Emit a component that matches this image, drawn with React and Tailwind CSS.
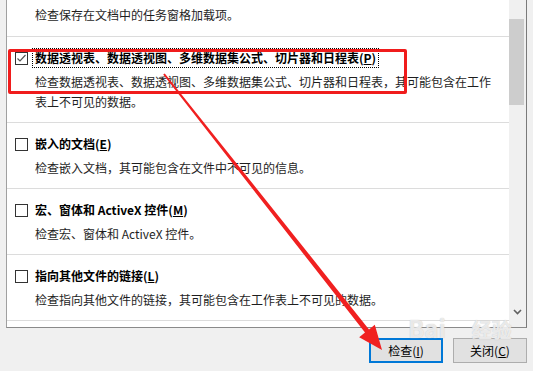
import React from "react";

const rows = [
  {
    title: "数据透视表、数据透视图、多维数据集公式、切片器和日程表(",
    key: "P",
    desc: [
      "检查数据透视表、数据透视图、多维数据集公式、切片器和日程表，其可能包含在工作",
      "表上不可见的数据。",
    ],
    checked: true,
  },
  {
    title: "嵌入的文档(",
    key: "E",
    desc: ["检查嵌入文档，其可能包含在文件中不可见的信息。"],
  },
  {
    title: "宏、窗体和 ActiveX 控件(",
    key: "M",
    desc: ["检查宏、窗体和 ActiveX 控件。"],
  },
  {
    title: "指向其他文件的链接(",
    key: "L",
    desc: ["检查指向其他文件的链接，其可能包含在工作表上不可见的数据。"],
  },
];

const CheckBox = ({ checked }) => (
  <div className="w-[13px] h-[13px] border border-[#333] bg-white flex items-center justify-center shrink-0">
    {checked && (
      <svg width="11" height="11" viewBox="0 0 11 11">
        <polyline
          points="1.5,5.5 4,8 9.5,2"
          fill="none"
          stroke="#555"
          strokeWidth="1.2"
        />
      </svg>
    )}
  </div>
);

const Row = ({ row }) => (
  <div className="border-t border-[#dcdcdc] pt-[13px] pb-[10px] pl-[8px]">
    <div className="flex items-center h-4">
      <CheckBox checked={row.checked} />
      <div
        className={
          "ml-[5px] px-[2px] font-bold text-black leading-[18px] " +
          (row.checked ? "outline outline-1 outline-dotted outline-black" : "")
        }
      >
        {row.title}
        <span className="underline">{row.key}</span>)
      </div>
    </div>
    <div className="mt-[6px] pl-[20px] text-[#1e1e1e] leading-[20px]">
      {row.desc.map((d, i) => (
        <div key={i}>{d}</div>
      ))}
    </div>
  </div>
);

const App = () => {
  return (
    <div
      className="relative w-[533px] h-[371px] bg-[#f0f0f0] overflow-hidden text-[12px]"
      style={{ fontFamily: '"Noto Sans CJK SC", "Noto Sans", sans-serif' }}
    >
      <div className="ml-[6px] w-[521px] h-[328px] flex bg-white border-l border-r border-b border-l-[#a0a0a0] border-r-[#7a7a7a] border-b-[#8a8a8a]">
        <div className="flex-1">
          <div className="pt-[5px] pb-[11px] pl-[28px] leading-[20px] text-[#1e1e1e]">
            检查保存在文档中的任务窗格加载项。
          </div>
          {rows.map((r, i) => (
            <Row key={i} row={r} />
          ))}
          <div className="border-t border-[#dcdcdc]" />
        </div>
        <div className="w-[17px] bg-[#f0f0f0] flex flex-col">
          <div className="h-[19px]" />
          <div className="h-[86px] w-[15px] bg-[#cdcdcd]" />
          <div className="flex-1" />
          <div className="h-[18px] flex items-start justify-center">
            <svg width="9" height="6" viewBox="0 0 9 6">
              <polyline
                points="1,1 4.5,4.5 8,1"
                fill="none"
                stroke="#606060"
                strokeWidth="1.6"
              />
            </svg>
          </div>
        </div>
      </div>

      <div className="flex justify-end gap-[10px] pr-[6px] mt-[10px]">
        <button className="w-[74px] h-[25px] bg-[#e1e1e1] border-2 border-[#0078d7] text-black text-[12px] flex items-center justify-center">
          检查(<span className="underline">I</span>)
        </button>
        <button className="w-[74px] h-[25px] bg-[#e1e1e1] border border-[#adadad] text-black text-[12px] flex items-center justify-center">
          关闭(<span className="underline">C</span>)
        </button>
      </div>

      <div className="absolute left-[408px] top-[316px] text-[24px] font-bold leading-none text-white/70 [text-shadow:0_0_1px_#b8b8b8] pointer-events-none">
        Bai<span className="ml-[26px] text-[20px]">经验</span>
      </div>

      <div className="absolute left-[8px] top-[49px] w-[399px] h-[45px] border-[3px] border-[#f01c1c] rounded-[2px] pointer-events-none" />

      <svg
        className="absolute left-0 top-0 pointer-events-none"
        width="533"
        height="371"
        viewBox="0 0 533 371"
      >
        <polygon
          points="164.8,73.4 163.2,74.6 365,332.6 359.2,337.2 382,350 374.8,324.8 369,329.4"
          fill="#f02020"
        />
      </svg>
    </div>
  );
};

export default App;
